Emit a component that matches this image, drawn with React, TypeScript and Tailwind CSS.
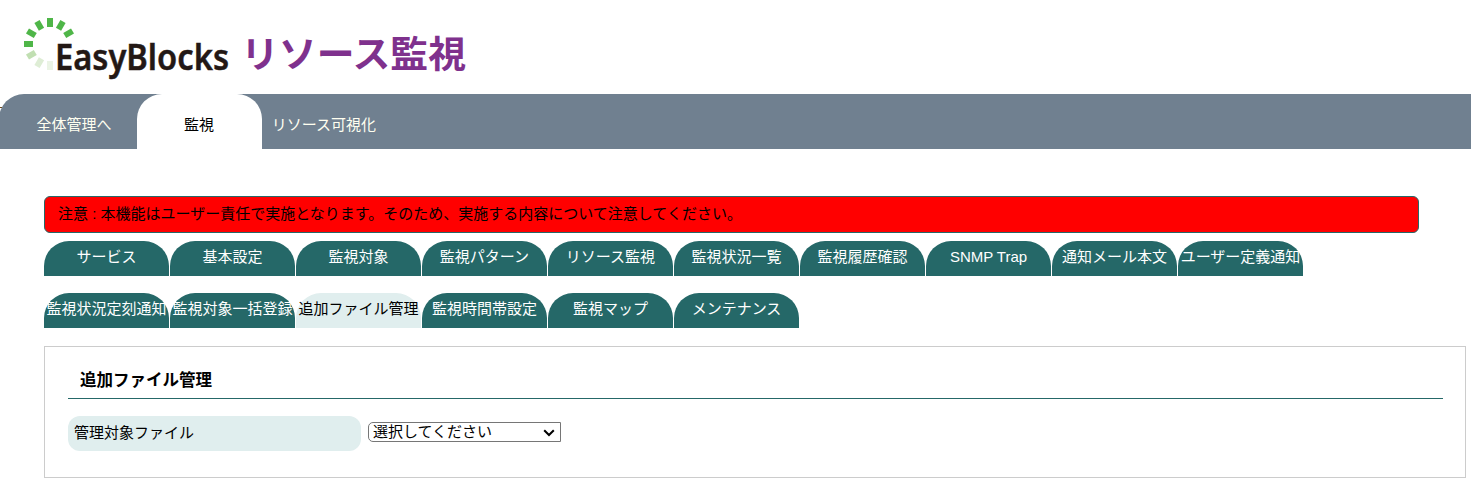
const rows = [
  ['サービス', '基本設定', '監視対象', '監視パターン', 'リソース監視', '監視状況一覧', '監視履歴確認', 'SNMP Trap', '通知メール本文', 'ユーザー定義通知'],
  ['監視状況定刻通知', '監視対象一括登録', '追加ファイル管理', '監視時間帯設定', '監視マップ', 'メンテナンス'],
];
const active = '追加ファイル管理';

const ticks = [
  { angle: -90, color: '#4fb648' },
  { angle: -60, color: '#4fb648' },
  { angle: -30, color: '#4fb648' },
  { angle: 0, color: '#4fb648' },
  { angle: 30, color: '#4fb648' },
  { angle: 60, color: '#4fb648' },
  { angle: -120, color: '#c1dfb2' },
  { angle: -150, color: '#deedd5' },
  { angle: 180, color: '#ebf4e5' },
];

function Logo() {
  return (
    <svg width="480" height="94" viewBox="0 0 480 94" className="block">
      {ticks.map((t) => (
        <rect key={t.angle} x="47" y="18" width="6" height="9" fill={t.color} transform={`rotate(${t.angle} 50 44)`} />
      ))}
      <text x="55" y="70.2" textLength="174" lengthAdjust="spacingAndGlyphs" fill="#231815" stroke="#231815" strokeWidth="0.5" className="font-['Noto_Sans',sans-serif] text-[36px] font-semibold">
        EasyBlocks
      </text>
      <text x="241" y="68" textLength="225" lengthAdjust="spacingAndGlyphs" fill="#7f318d" className="font-['Noto_Sans_CJK_JP',sans-serif] text-[37px] font-bold">
        リソース監視
      </text>
    </svg>
  );
}

export default function App() {
  return (
    <div className="h-[485px] overflow-hidden bg-white font-['Liberation_Sans','Noto_Sans_CJK_JP',sans-serif] text-[15px] leading-[22px] text-black">
      <header>
        <Logo />
        <nav className="relative -ml-[1px] flex h-[55px] rounded-tl-[25px] bg-[#708090] pl-[13px] text-center leading-[61px] text-[#fffff0]">
          <span className="absolute top-[13px] left-px h-px w-[2px] bg-[#6b4a1e]" />
          <a className="w-[125px] pr-px">全体管理へ</a>
          <a className="w-[125px] rounded-t-[25px] bg-white pr-px text-black">監視</a>
          <a className="w-[125px] pr-px">リソース可視化</a>
        </nav>
      </header>
      <main className="pt-[47px] pl-[44px]">
        <div className="h-[37px] w-[1375px] rounded-md border border-[#256868] bg-[#ff0000] pl-[13px] leading-[34px]">
          注意 : 本機能はユーザー責任で実施となります。そのため、実施する内容について注意してください。
        </div>
        <div className="mt-2 flex flex-col gap-[17px]">
          {rows.map((row) => (
            <div key={row[0]} className="flex gap-px">
              {row.map((label) => (
                <a
                  key={label}
                  className={`h-[35px] w-[125px] rounded-t-[25px] text-center leading-[31px] whitespace-nowrap ${
                    label === active ? 'bg-[#e0eeee] text-black' : 'bg-[#256868] text-white'
                  }`}
                >
                  {label}
                </a>
              ))}
            </div>
          ))}
        </div>
        <section className="mt-[18px] h-[132px] w-[1422px] border border-[#cccccc] px-[23px] pt-[17px]">
          <h1 className="mr-[-1px] h-[35px] w-[1375px] border-b border-[#256868] pl-3 text-[16.5px] leading-[33px] font-bold">追加ファイル管理</h1>
          <div className="mt-[17px] flex">
            <label className="h-[35px] w-[293px] rounded-[12px] bg-[#e0eeee] pl-[6px] leading-[33px]">管理対象ファイル</label>
            <div className="mt-[6px] ml-[7px] flex h-5 w-[193px] items-center justify-between rounded-l-[5px] border border-[#767676] pr-[5px] pl-1">
              <span className="leading-[18px]">選択してください</span>
              <svg width="12" height="8" viewBox="0 0 12 8" fill="none" stroke="#000" strokeWidth="2" className="mt-[2px]">
                <path d="M1.2 1.2 6 6l4.8-4.8" />
              </svg>
            </div>
          </div>
        </section>
      </main>
    </div>
  );
}
